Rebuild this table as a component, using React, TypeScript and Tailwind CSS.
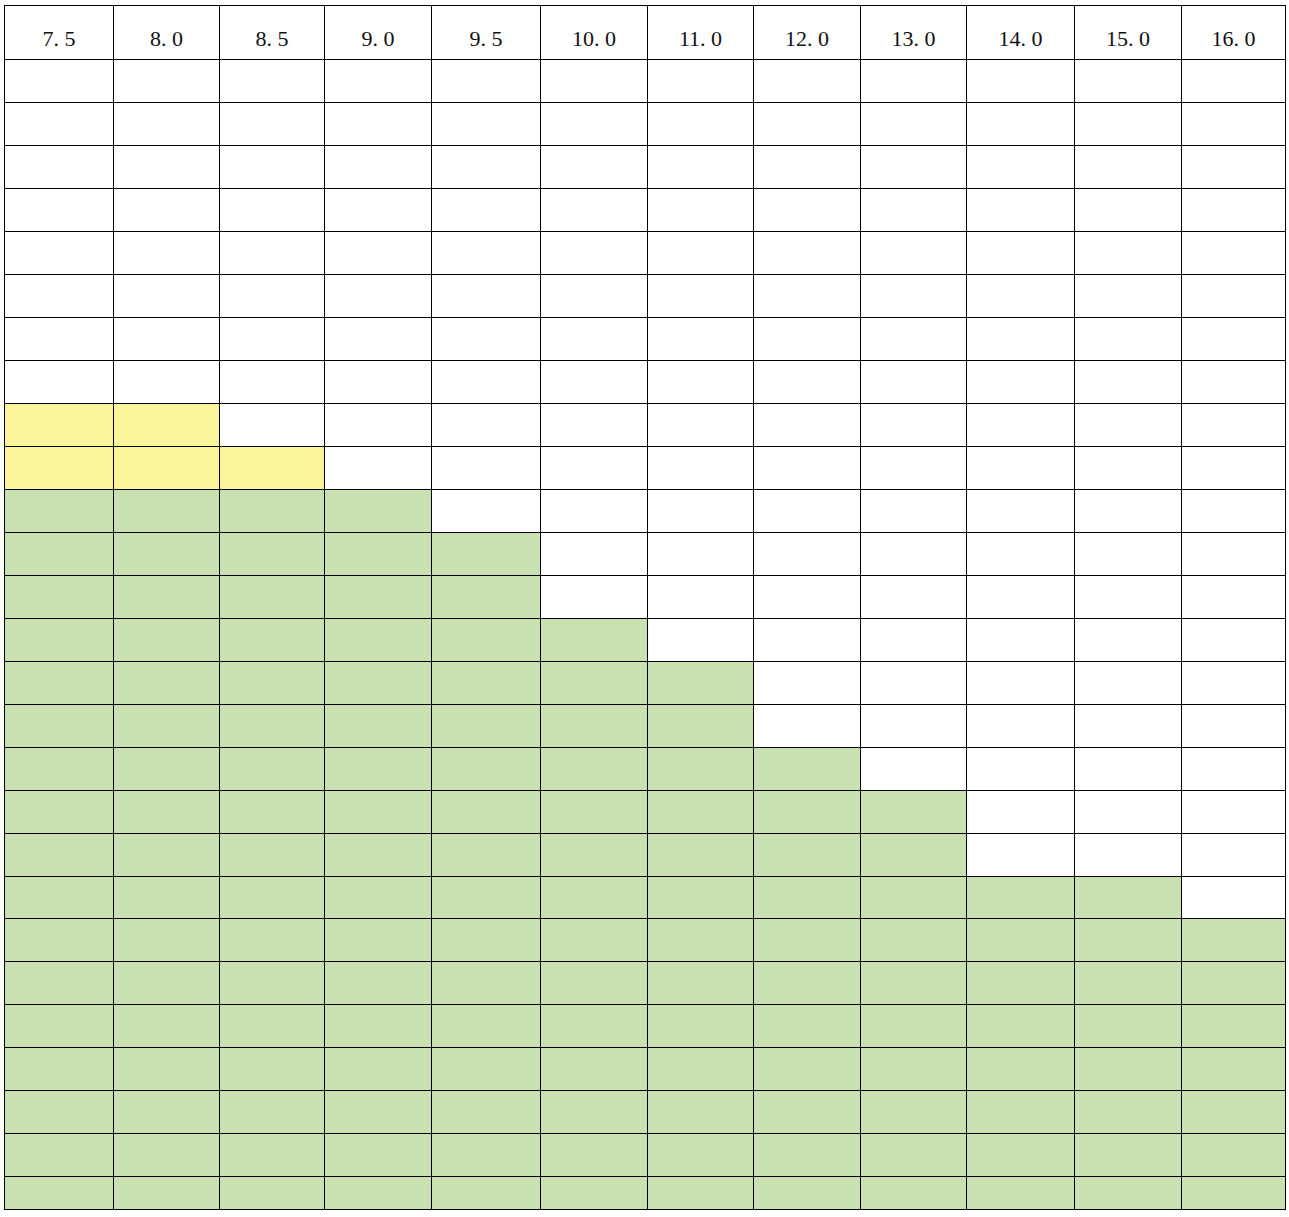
import React from "react";

const headers = ["7.5", "8.0", "8.5", "9.0", "9.5", "10.0", "11.0", "12.0", "13.0", "14.0", "15.0", "16.0"];

// row boundaries measured from the sheet
const rowHeights = [
  43, 43, 43, 43, 43, 43, 43, 43, 43, 43, 43, 43, 43, 43, 43, 43, 43, 43, 43, 42, 43, 43, 43, 43, 43, 43, 33,
];

// how many cells from the left are filled on each body row
const greenCount = [0, 0, 0, 0, 0, 0, 0, 0, 0, 0, 4, 5, 5, 6, 7, 7, 8, 9, 9, 11, 12, 12, 12, 12, 12, 12, 12];
const yellowCount = [0, 0, 0, 0, 0, 0, 0, 0, 2, 3, 0, 0, 0, 0, 0, 0, 0, 0, 0, 0, 0, 0, 0, 0, 0, 0, 0];

function Label({ text }: { text: string }) {
  const [a, b] = text.split(".");
  return (
    <span>
      {a}
      <span className="inline-block w-[0.5em]">.</span>
      {b}
    </span>
  );
}

export default function App() {
  return (
    <div className="min-h-screen bg-white pt-[5px] pl-[4px]">
      <div
        className="grid w-fit border-l border-t border-black grid-cols-[109px_106px_105px_107px_109px_107px_106px_107px_106px_108px_107px_104px]"
        style={{ fontFamily: '"Liberation Serif", "Noto Sans CJK SC", serif' }}
      >
        {headers.map((h) => (
          <div
            key={h}
            className="h-[54px] flex items-end justify-center pb-[9px] border-r border-b border-black text-[22px] text-[#111] leading-none"
          >
            <Label text={h} />
          </div>
        ))}
        {rowHeights.map((rh, r) =>
          headers.map((_, c) => {
            let bg = "bg-white";
            if (c < greenCount[r]) bg = "bg-[#c9e0b1]";
            else if (c < yellowCount[r]) bg = "bg-[#faf49a]";
            return (
              <div
                key={`${r}-${c}`}
                className={`border-r border-b border-black ${bg}`}
                style={{ height: rh }}
              />
            );
          })
        )}
      </div>
    </div>
  );
}
